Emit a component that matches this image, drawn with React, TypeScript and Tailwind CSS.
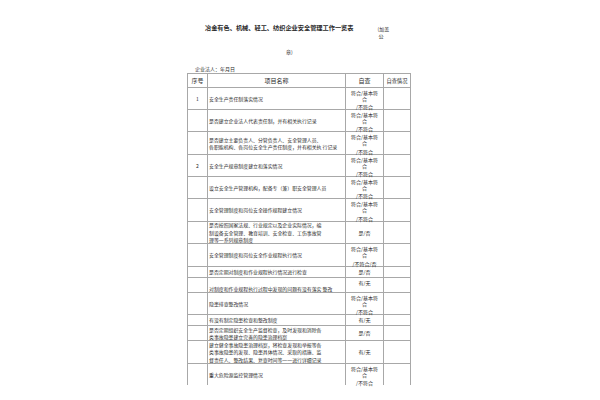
import React from "react"

type Check = "full" | "fullNo" | "yes" | "have" | "haveTop"

interface Row {
  seq?: string
  name: string[]
  check: Check
  h: number
  nameAlign?: "center" | "bottom"
}

const rows: Row[] = [
  { seq: "1", name: ["安全生产责任制落实情况"], check: "full", h: 22 },
  { name: ["是否建立企业法人代表责任制，并有相关执行记录"], check: "full", h: 22 },
  {
    name: ["是否建立主要负责人、分管负责人、安全管理人员、", "各职能机构、各岗位安全生产责任制度，并有相关执 行记录"],
    check: "full",
    h: 23,
  },
  { seq: "2", name: ["安全生产规章制度建立和落实情况"], check: "full", h: 22 },
  { name: ["设立安全生产管理机构，配备专（兼）职安全管理人员"], check: "full", h: 22 },
  { name: ["安全管理制度和岗位安全操作规程建立情况"], check: "full", h: 23 },
  {
    name: [
      "是否按照国家法规、行业规定以及企业实际情况，编",
      "制设备安全管理、教育培训、安全检查、工伤事故管",
      "理等一系列规章制度",
    ],
    check: "yes",
    h: 22,
  },
  { name: ["安全管理制度和岗位安全作业规程执行情况"], check: "fullNo", h: 23 },
  { name: ["是否定期对制度和作业规程执行情况进行检查"], check: "yes", h: 11 },
  { name: ["对制度和作业规程执行过程中发现的问题有没有落实 整改"], check: "haveTop", h: 15, nameAlign: "bottom" },
  { name: ["隐患排查整改情况"], check: "full", h: 22 },
  { name: ["有没有制定隐患检查和整改制度"], check: "have", h: 11 },
  {
    name: ["是否定期组织安全生产监督检查，及时发现和消除各", "类事故隐患建立完善的隐患治理档案"],
    check: "yes",
    h: 15,
  },
  {
    name: [
      "建立健全事故隐患治理档案，将检查发现和举报等各",
      "类事故隐患的发现、隐患具体情况、采取的措施、监",
      "督责任人、整改结果、复查时间等一一进行详细记录",
    ],
    check: "have",
    h: 23,
  },
  { name: ["重大危险源监控管理情况"], check: "full", h: 22 },
]

function CheckCell({ check }: { check: Check }) {
  if (check === "full" || check === "fullNo") {
    return (
      <div className="flex h-full flex-col items-center justify-between pt-[2px] text-center text-[5px] leading-[6px]">
        <div>
          符合/基本符
          <br />合
        </div>
        <div className="-mb-[1px]">{check === "full" ? "/不符合" : "/不符合/否"}</div>
      </div>
    )
  }
  const label = check === "yes" ? "是/否" : "有/无"
  return (
    <div
      className={
        check === "haveTop"
          ? "flex h-full items-start justify-center pt-[2px] text-[5px] leading-[6px]"
          : "flex h-full items-center justify-center text-[5px] leading-[6px]"
      }
    >
      {label}
    </div>
  )
}

export default function App() {
  return (
    <div
      className="relative h-[400px] w-[600px] overflow-hidden bg-white text-[#2a2a2a]"
      style={{ fontFamily: '"Noto Sans CJK SC", "Noto Sans", sans-serif' }}
    >
      {/* title */}
      <div className="flex h-[40px] pl-[205px] pt-[24px]">
        <span className="text-[6.2px] font-bold leading-[8px] whitespace-nowrap">
          冶金有色、机械、轻工、纺织企业安全管理工作一览表
        </span>
        <div className="ml-[24px] pt-[1px] text-[5px] leading-[7px]">
          (加盖
          <br />
          <span className="pl-[1px]">公</span>
        </div>
      </div>
      <div className="h-[20px] pl-[286px] pt-[8px] text-[5px] leading-[7px]">章)</div>
      <div className="h-[13px] pl-[195px] pt-[4.5px] text-[5px] leading-[7px]">企业法人：年月日</div>

      {/* table */}
      <div className="ml-[187px] w-[224px]">
        <div className="flex h-[14px] border-t border-[#a8a8a8] text-[6px] leading-[8px]">
          <div className="flex w-[20px] items-center justify-center border-l border-[#a8a8a8]">序号</div>
          <div className="flex w-[138px] items-center justify-center border-l border-[#a8a8a8]">项目名称</div>
          <div className="flex w-[38px] items-center justify-center border-l border-[#a8a8a8]">自查</div>
          <div className="flex w-[28px] items-center justify-center border-x border-[#a8a8a8] text-[5.2px]">
            自查情况
          </div>
        </div>
        {rows.map((r, i) => (
          <div key={i} className="flex border-t border-[#a8a8a8]" style={{ height: r.h }}>
            <div className="flex w-[20px] items-center justify-center border-l border-[#a8a8a8] text-[5px]">
              {r.seq}
            </div>
            <div
              className={
                r.nameAlign === "bottom"
                  ? "flex w-[138px] flex-col justify-end border-l border-[#a8a8a8] pl-[1px] text-[4.9px] leading-[7px] whitespace-nowrap"
                  : "flex w-[138px] flex-col justify-center border-l border-[#a8a8a8] pl-[1px] text-[4.9px] leading-[7.5px] whitespace-nowrap"
              }
            >
              {r.name.map((t, j) => (
                <div key={j}>{t}</div>
              ))}
            </div>
            <div className="w-[38px] border-l border-[#a8a8a8]">
              <CheckCell check={r.check} />
            </div>
            <div className="w-[28px] border-x border-[#a8a8a8]" />
          </div>
        ))}
      </div>
    </div>
  )
}
